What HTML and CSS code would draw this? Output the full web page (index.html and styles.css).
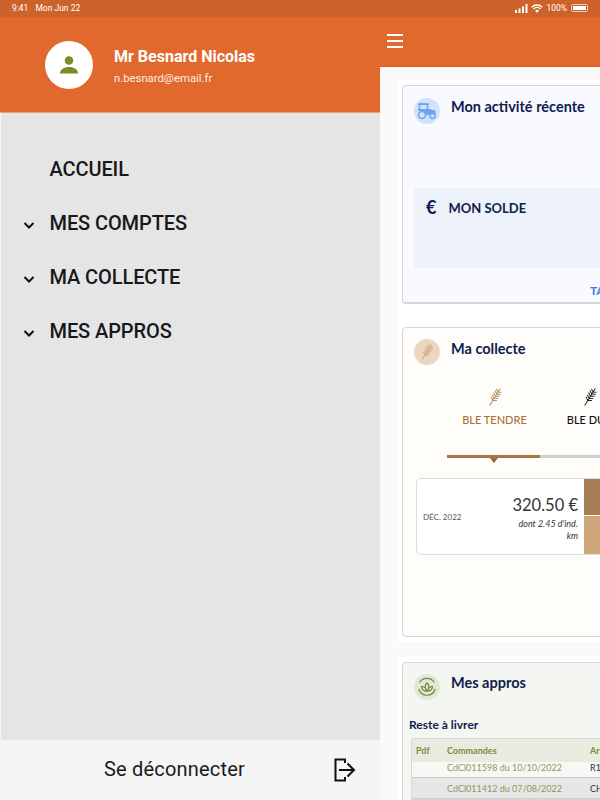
FILE: index.html
```html
<!DOCTYPE html>
<html lang="fr">
<head>
  <meta charset="UTF-8" />
  <meta name="viewport" content="width=device-width, initial-scale=1.0" />
  <title>Mon espace</title>
  <link rel="stylesheet" href="styles.css">
</head>
<body>
  <div class="status-bar">
    <div class="status-left"><span>9:41</span><span>Mon Jun 22</span></div>
    <div class="status-right">
      <svg width="13" height="9" viewBox="0 0 13 9"><path fill="#fff" d="M0 6h2v3H0zM3.500 4.500h2V9h-2zM7 2.500h2V9H7zM10.500 0h2v9h-2z"/></svg>
      <svg width="12" height="9" viewBox="0 0 12 9"><path fill="none" stroke="#fff" stroke-width="1.400" d="M.7 3.200a7.600 7.600 0 0 1 10.600 0M2.500 5a5 5 0 0 1 7 0"/><path fill="#fff" d="M6 8.800 4 6.700a2.900 2.900 0 0 1 4 0z"/></svg>
      <span>100%</span>
      <div class="battery"><div class="battery-fill"></div></div>
    </div>
  </div>

  <div class="app">
    <aside class="drawer">
      <header class="profile">
        <div class="avatar">
          <svg width="20" height="20" viewBox="0 0 20 20"><circle cx="10" cy="5.500" r="4.300" fill="#7c8b25"/><path fill="#7c8b25" d="M1 18.500c0-4 4-6.500 9-6.500s9 2.500 9 6.500z"/></svg>
        </div>
        <div>
          <div class="profile-name">Mr Besnard Nicolas</div>
          <div class="profile-mail">n.besnard@email.fr</div>
        </div>
      </header>

      <nav class="menu">
        <a class="menu-item"><span class="menu-chevron"></span>ACCUEIL</a>
        <a class="menu-item">
          <span class="menu-chevron"><svg width="12" height="7" viewBox="0 0 12 7"><path fill="none" stroke="#111" stroke-width="2" d="M1.500 1 6 5.500 10.500 1"/></svg></span>MES COMPTES
        </a>
        <a class="menu-item">
          <span class="menu-chevron"><svg width="12" height="7" viewBox="0 0 12 7"><path fill="none" stroke="#111" stroke-width="2" d="M1.500 1 6 5.500 10.500 1"/></svg></span>MA COLLECTE
        </a>
        <a class="menu-item">
          <span class="menu-chevron"><svg width="12" height="7" viewBox="0 0 12 7"><path fill="none" stroke="#111" stroke-width="2" d="M1.500 1 6 5.500 10.500 1"/></svg></span>MES APPROS
        </a>
      </nav>

      <footer class="logout">
        <span>Se déconnecter</span>
        <svg class="logout-icon" width="22" height="24" viewBox="0 0 22 24"><path fill="none" stroke="#111" stroke-width="2" d="M11 5V1.500H1.500v21H11V19M5 12h15M13.500 5.500 20 12l-6.500 6.500"/></svg>
      </footer>
    </aside>

    <main class="main">
      <div class="topbar">
        <div class="burger"><span></span><span></span><span></span></div>
      </div>

      <div class="content">
        <div class="panel">
          <section class="card card-activity">
            <div class="card-head">
              <div class="round round-blue">
                <svg width="20" height="17" viewBox="0 0 20 17"><g fill="none" stroke="#6aa5f5" stroke-width="1.500"><circle cx="5" cy="12" r="3.500"/><circle cx="15.500" cy="13" r="2.500"/><path d="M2.500 8V1h8v5"/></g><path fill="#6aa5f5" d="M1 6h11l6 1.500 1 3.500h-4l-3 1H9L6 8H1zM1 .5h11V2H1z"/></svg>
              </div>
              <h2 class="card-title">Mon activité récente</h2>
            </div>
            <div class="balance">
              <span class="balance-euro">€</span>
              <span class="balance-label">MON SOLDE</span>
            </div>
            <div class="card-link">TABLEAU DE BORD</div>
          </section>

          <section class="card card-collect">
            <div class="card-head card-head-top">
              <div class="round round-tan">
                <svg width="18" height="18" viewBox="0 0 20 20"><use href="#wheat" stroke="#c9a27c"/></svg>
              </div>
              <h2 class="card-title">Ma collecte</h2>
            </div>
            <div class="tabs">
              <div class="tab tab-active">
                <svg width="20" height="20" viewBox="0 0 20 20"><use href="#wheat" stroke="#b58a5c"/></svg>
                <span>BLE TENDRE</span>
              </div>
              <div class="tab">
                <svg width="20" height="20" viewBox="0 0 20 20"><use href="#wheat" stroke="#222"/></svg>
                <span>BLE DUR</span>
              </div>
            </div>
            <div class="progress"><div class="progress-done"></div></div>
            <div class="entry">
              <div class="entry-date">DÉC. 2022</div>
              <div class="entry-amounts">
                <div class="entry-price">320.50 €</div>
                <div class="entry-note">dont 2.45 d'ind. km</div>
              </div>
              <div class="entry-actions">
                <div class="entry-action-dark"></div>
                <div class="entry-action-light"></div>
              </div>
            </div>
          </section>
        </div>

        <div class="panel panel-next">
          <section class="card card-supply">
            <div class="card-head">
              <div class="round round-green">
                <svg width="20" height="20" viewBox="0 0 20 20"><g fill="none" stroke="#6d8a3a" stroke-width="1.200"><path d="M2.500 5.500a9 9 0 0 1 15 0M1.800 12a8.500 8.500 0 0 0 16.400 0"/><path d="M10 6c2.500 2 2.500 5 0 8-2.500-3-2.500-6 0-8zM4.500 9.500c2.500 0 4.500 2 5.500 4.500-3 .3-5.500-1.500-5.500-4.500zM15.500 9.500c-2.500 0-4.500 2-5.500 4.500 3 .3 5.500-1.500 5.500-4.500z"/></g></svg>
              </div>
              <h2 class="card-title">Mes appros</h2>
            </div>
            <h3 class="supply-title">Reste à livrer</h3>
            <div class="orders">
              <div class="orders-row orders-head">
                <span>Pdf</span><span>Commandes</span><span>Articles</span>
              </div>
              <div class="orders-row orders-row-first">
                <span></span><span class="order-ref">CdCl011598 du 10/10/2022</span><span>R1</span>
              </div>
              <div class="orders-row orders-row-alt">
                <span></span><span class="order-ref">CdCl011412 du 07/08/2022</span><span>CH</span>
              </div>
            </div>
          </section>
        </div>
      </div>
    </main>
  </div>

  <svg class="defs" width="0" height="0">
    <defs>
      <g id="wheat" fill="none" stroke-width="1" transform="rotate(32 10 10)">
        <path d="M10 20V0"/>
        <path d="M6.500 4.500l3.500 2 3.500-2M6.500 7l3.500 2 3.500-2M6.500 9.500l3.500 2 3.500-2M6.500 12l3.500 2 3.500-2M7 2.500l3 1.500 3-1.500"/>
      </g>
    </defs>
  </svg>
</body>
</html>
```

FILE: styles.css
```css
* {
  box-sizing: border-box;
}

html, body {
  height: 100%;
}

body {
  margin: 0;
  width: 600px;
  height: 800px;
  overflow: hidden;
  display: flex;
  flex-direction: column;
  font-family: Roboto, sans-serif;
  background: #fafafa;
}

.defs {
  position: absolute;
}

/* status bar */
.status-bar {
  height: 17px;
  flex-shrink: 0;
  display: flex;
  justify-content: space-between;
  align-items: center;
  padding: 0 12px 1px 12px;
  background: #cd632b;
  color: #fff;
  font-size: 8.500px;
}

.status-left {
  display: flex;
  gap: 7px;
}

.status-right {
  display: flex;
  align-items: center;
  gap: 3px;
}

.battery {
  width: 17px;
  height: 8px;
  margin-left: 1px;
  padding: 1px;
  border: 1px solid #f0c7ae;
  border-radius: 2px;
}

.battery-fill {
  height: 100%;
  background: #fff;
}

.app {
  flex: 1;
  display: flex;
  min-height: 0;
}

/* drawer */
.drawer {
  width: 380px;
  flex-shrink: 0;
  display: flex;
  flex-direction: column;
  background: #e5e5e5;
  border-left: 1px solid #f5f5f5;
}

.profile {
  height: 96px;
  margin-left: -1px;
  display: flex;
  align-items: center;
  gap: 21px;
  padding: 0 0 0 45px;
  background: #e1692d;
  border-bottom: 1px solid #f0a070;
  color: #fff;
}

.avatar {
  width: 48px;
  height: 48px;
  border-radius: 50%;
  background: #fff;
  display: flex;
  align-items: center;
  justify-content: center;
}

.profile-name {
  font-size: 16px;
  font-weight: 700;
  line-height: 19px;
  margin-top: 3px;
}

.profile-mail {
  margin-top: 5px;
  font-size: 11.300px;
  line-height: 15px;
  color: #fdeee5;
}

.menu {
  flex: 1;
  padding-top: 29px;
}

.menu-item {
  height: 54px;
  display: flex;
  align-items: center;
  font-size: 20px;
  font-weight: 500;
  letter-spacing: -0.1px;
  color: #16181c;
}

.menu-chevron {
  width: 49.500px;
  margin-left: -1px;
  padding: 5px 0 0 23px;
  line-height: 0;
}

.logout {
  height: 60px;
  position: relative;
  display: flex;
  align-items: center;
  justify-content: center;
  padding-right: 32px;
  padding-bottom: 2px;
  background: #f5f5f5;
  font-size: 20px;
  color: #1a1a1a;
  letter-spacing: 0.2px;
}

.logout-icon {
  position: absolute;
  left: 333px;
  top: 18px;
}

/* main */
.main {
  flex: 1;
  min-width: 0;
  display: flex;
  flex-direction: column;
  font-family: Lato, sans-serif;
}

.topbar {
  height: 50px;
  flex-shrink: 0;
  display: flex;
  align-items: center;
  padding: 0 0 2px 7px;
  background: #e1692d;
  border-bottom: 1px solid #dd5a18;
}

.burger {
  width: 16px;
  display: flex;
  flex-direction: column;
  gap: 4px;
}

.burger span {
  height: 2px;
  background: #fff;
}

.content {
  flex: 1;
  padding: 13px 0 0 18px;
  width: 420px;
}

.panel {
  background: #fff;
  padding: 5px 4px;
}

.panel-next {
  margin-top: 15px;
}

.card {
  border: 1px solid #d6d6d6;
  border-radius: 4px;
}

.card-activity {
  height: 219px;
  background: #f8faff;
  border-bottom-width: 2px;
  padding: 0 11px;
  position: relative;
}

.card-collect {
  height: 310px;
  margin-top: 23px;
  background: #fffdf9;
  padding: 0 14px;
}

.card-supply {
  height: 200px;
  background: #f4f6f1;
  padding: 0 6px;
}

.card-head {
  display: flex;
  align-items: flex-start;
  gap: 11px;
  padding-top: 12px;
}

.card-head-top {
  margin-left: -3px;
  padding-top: 11px;
}

.card-supply .card-head {
  padding: 11px 0 0 5px;
}

.round {
  width: 26px;
  height: 26px;
  flex-shrink: 0;
  border-radius: 50%;
  display: flex;
  align-items: center;
  justify-content: center;
}

.round-blue {
  background: #d3e2f7;
}

.round-tan {
  background: #ead6c1;
}

.round-green {
  background: #e2e8d6;
}

.card-title {
  margin: 0;
  font-size: 14.500px;
  font-weight: 700;
  line-height: 18px;
  color: #0e1c4e;
}

.card-head-top .card-title {
  margin-top: 1px;
}

.balance {
  height: 80px;
  margin-top: 64px;
  display: flex;
  gap: 12px;
  padding: 9px 12px;
  background: #eef3fb;
  border-radius: 3px;
}

.balance-euro {
  font-size: 18px;
  line-height: 20px;
  font-weight: 700;
  color: #0e1c4e;
}

.balance-label {
  font-size: 13px;
  line-height: 23px;
  font-weight: 700;
  color: #0e1c4e;
  white-space: nowrap;
}

.card-link {
  position: absolute;
  left: 187px;
  top: 197px;
  font-size: 12px;
  font-weight: 700;
  color: #3a80e0;
  white-space: nowrap;
}

.tabs {
  display: flex;
  margin: 22px 0 0 30px;
}

.tab {
  width: 95px;
  flex-shrink: 0;
  display: flex;
  flex-direction: column;
  align-items: center;
  gap: 6px;
  font-size: 11px;
  font-weight: 500;
  line-height: 14px;
  white-space: nowrap;
  color: #111;
}

.tab-active {
  color: #a9703a;
}

.progress {
  position: relative;
  width: 240px;
  height: 3px;
  margin: 28px 0 0 30px;
  background: #cfcfcf;
}

.progress-done {
  width: 93px;
  height: 100%;
  background: #ab7740;
}

.progress-done::after {
  content: "";
  position: absolute;
  left: 43px;
  top: 3px;
  border: 4px solid transparent;
  border-top: 5px solid #94683a;
  border-bottom: 0;
}

.entry {
  width: 231px;
  height: 77px;
  margin: 20px 0 0 -1px;
  display: flex;
  background: #fff;
  border: 1px solid #ddd;
  border-radius: 5px;
  overflow: hidden;
}

.entry-date {
  width: 62px;
  padding-left: 6px;
  align-self: center;
  font-size: 8px;
  color: #555;
}

.entry-amounts {
  width: 105px;
  padding: 16px 6px 0 28px;
  text-align: right;
  color: #333;
}

.entry-price {
  font-size: 16.500px;
  line-height: 20px;
}

.entry-note {
  margin-top: 3px;
  font-size: 9px;
  line-height: 12px;
  font-style: italic;
}

.entry-actions {
  flex: 1;
  display: flex;
  flex-direction: column;
}

.entry-action-dark {
  height: 37px;
  background: #a67e55;
  border-bottom: 1px solid #fff;
}

.entry-action-light {
  flex: 1;
  background: #cfa67c;
}

.supply-title {
  margin: 17px 0 0;
  font-size: 12px;
  font-weight: 700;
  line-height: 15px;
  color: #0e1c4e;
}

.orders {
  width: 300px;
  margin: 6px 0 0 2px;
  border: 1px solid #d6d6d6;
  border-radius: 3px 3px 0 0;
  font-size: 9px;
  color: #333;
}

.orders-row {
  height: 21px;
  display: grid;
  grid-template-columns: 31px 143px 1fr;
  align-items: center;
  padding-left: 4px;
  background: #f7f8f4;
  border-bottom: 1px solid #ccc;
  white-space: nowrap;
}

.orders-head {
  height: 23px;
  background: #e8ebe0;
  border: 0;
  font-weight: 700;
  color: #7c8b3a;
}

.orders-row-first {
  height: 16px;
  padding-bottom: 6px;
}

.orders-row-alt {
  background: #e6e6e6;
}

.order-ref {
  color: #8b9c5c;
}
```
